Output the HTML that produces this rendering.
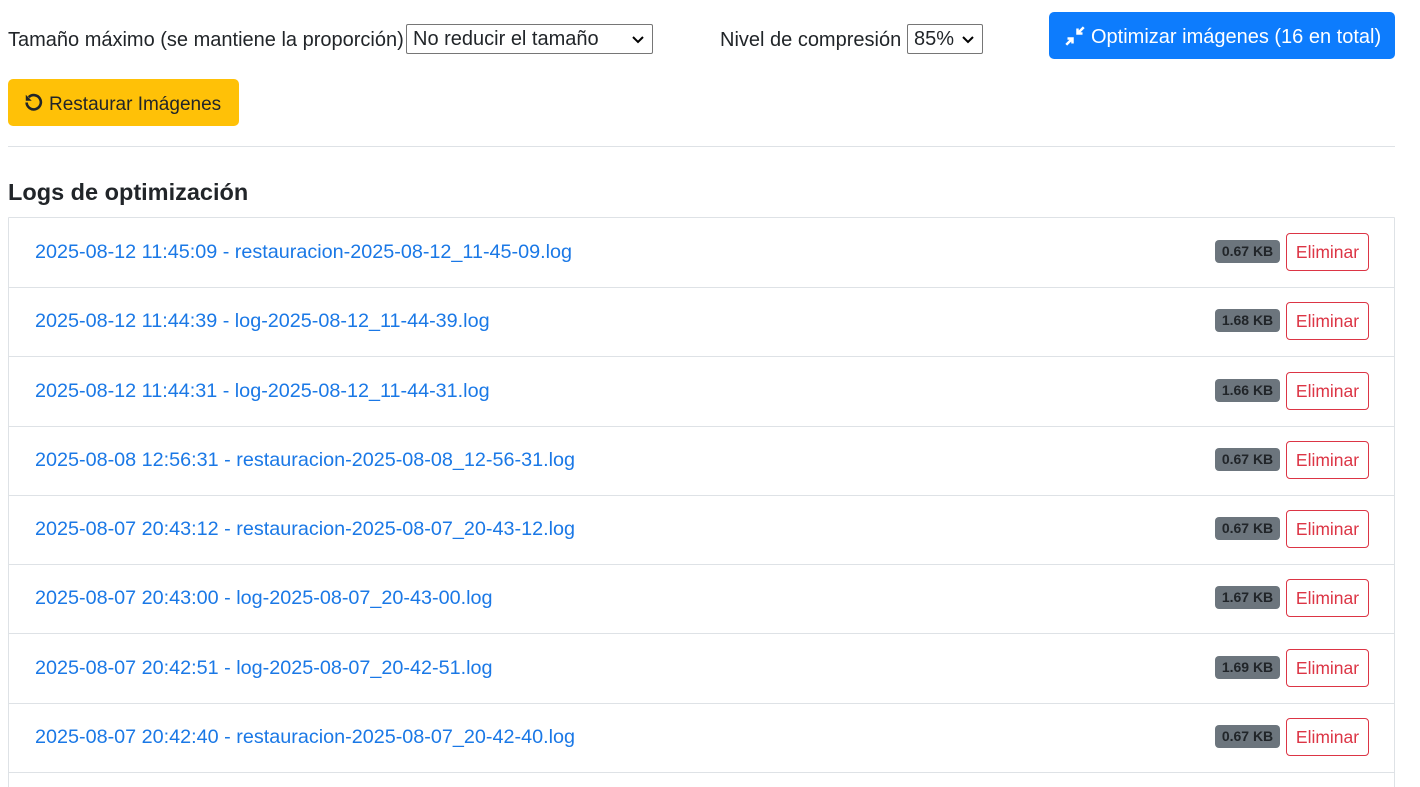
<!DOCTYPE html>
<html><head><meta charset="utf-8"><style>
*{box-sizing:border-box}
html,body{margin:0;width:1420px;height:787px;overflow:hidden}
body{background:#fff;font-family:"Liberation Sans",sans-serif;color:#212529;position:relative}
.a{position:absolute}
.lbl{font-size:20px;white-space:nowrap}
.sel{border:1px solid #767676;border-radius:2px;background:#fff;font-size:20px;padding:2px 6px;height:30px;line-height:24px;white-space:nowrap}
.sel svg{position:absolute;right:8px;top:11px}
.btn{border-radius:5px;font-size:20px;white-space:nowrap;display:flex;align-items:center;padding:4px 14px 0}
.btn svg{flex-shrink:0}
.row{position:absolute;left:8px;width:1387px;height:70px;border:1px solid #dee2e6;border-top:none}
.row a{position:absolute;left:26px;top:23px;font-size:19.8px;color:#1a78e6;text-decoration:none;white-space:nowrap}
.badge{position:absolute;left:1206px;top:22px;width:65px;height:23px;background:#6c757d;color:#212529;border-radius:4px;font-size:14px;font-weight:bold;text-align:center;line-height:23px}
.del{position:absolute;left:1277px;top:15px;width:83px;height:38px;border:1px solid #dc3545;border-radius:4px;color:#dc3545;font-size:17.5px;text-align:center;line-height:36px}
</style></head><body>
<div class="a lbl" style="left:8px;top:29px">Tamaño máximo (se mantiene la proporción)</div>
<div class="a sel" style="left:406px;top:24px;width:247px">No reducir el tamaño<svg width="12" height="8" viewBox="0 0 12 8"><path d="M1 1l5 5 5-5" stroke="#000" stroke-width="2" fill="none"/></svg></div>
<div class="a lbl" style="left:720px;top:29px">Nivel de compresión</div>
<div class="a sel" style="left:907px;top:24px;width:76px">85%<svg width="12" height="8" viewBox="0 0 12 8"><path d="M1 1l5 5 5-5" stroke="#000" stroke-width="2" fill="none"/></svg></div>
<div class="a btn" style="left:1049px;top:12px;width:346px;height:47px;background:#0d7cfd;color:#fff;padding-left:16px">
<svg width="20" height="20" viewBox="0 0 16 16" style="margin-right:6px;margin-top:-4px"><path d="M1 15l5-5M2 10h4v4M15 1l-5 5M14 6h-4V2" stroke="#fff" stroke-width="2" fill="none"/></svg>Optimizar imágenes (16 en total)</div>
<div class="a btn" style="left:8px;top:79px;width:231px;height:47px;background:#ffc107;color:#212529;font-size:19px;padding-left:16px">
<svg width="19" height="19" viewBox="0 0 16 16" style="margin-right:6px;margin-top:-4px"><path d="M4 3.5A6 6 0 1 1 2.2 8" stroke="#212529" stroke-width="2.2" fill="none"/><path d="M1.5 1.5v5h5z" fill="#212529"/></svg>Restaurar Imágenes</div>
<div class="a" style="left:8px;top:146px;width:1387px;height:1px;background:#dee2e6"></div>
<div class="a" style="left:8px;top:179px;font-size:23.5px;font-weight:bold;white-space:nowrap">Logs de optimización</div>
<div class="a" style="left:8px;top:217px;width:1387px;height:1px;border-top:1px solid #dee2e6;border-radius:5px 5px 0 0"></div>
<div class="row" style="top:218px"><a>2025-08-12 11:45:09 - restauracion-2025-08-12_11-45-09.log</a><div class="badge">0.67 KB</div><div class="del">Eliminar</div></div>
<div class="row" style="top:287px"><a>2025-08-12 11:44:39 - log-2025-08-12_11-44-39.log</a><div class="badge">1.68 KB</div><div class="del">Eliminar</div></div>
<div class="row" style="top:357px"><a>2025-08-12 11:44:31 - log-2025-08-12_11-44-31.log</a><div class="badge">1.66 KB</div><div class="del">Eliminar</div></div>
<div class="row" style="top:426px"><a>2025-08-08 12:56:31 - restauracion-2025-08-08_12-56-31.log</a><div class="badge">0.67 KB</div><div class="del">Eliminar</div></div>
<div class="row" style="top:495px"><a>2025-08-07 20:43:12 - restauracion-2025-08-07_20-43-12.log</a><div class="badge">0.67 KB</div><div class="del">Eliminar</div></div>
<div class="row" style="top:564px"><a>2025-08-07 20:43:00 - log-2025-08-07_20-43-00.log</a><div class="badge">1.67 KB</div><div class="del">Eliminar</div></div>
<div class="row" style="top:634px"><a>2025-08-07 20:42:51 - log-2025-08-07_20-42-51.log</a><div class="badge">1.69 KB</div><div class="del">Eliminar</div></div>
<div class="row" style="top:703px"><a>2025-08-07 20:42:40 - restauracion-2025-08-07_20-42-40.log</a><div class="badge">0.67 KB</div><div class="del">Eliminar</div></div>
<div class="row" style="top:772px;height:15px;border-bottom:none"></div>
</body></html>
